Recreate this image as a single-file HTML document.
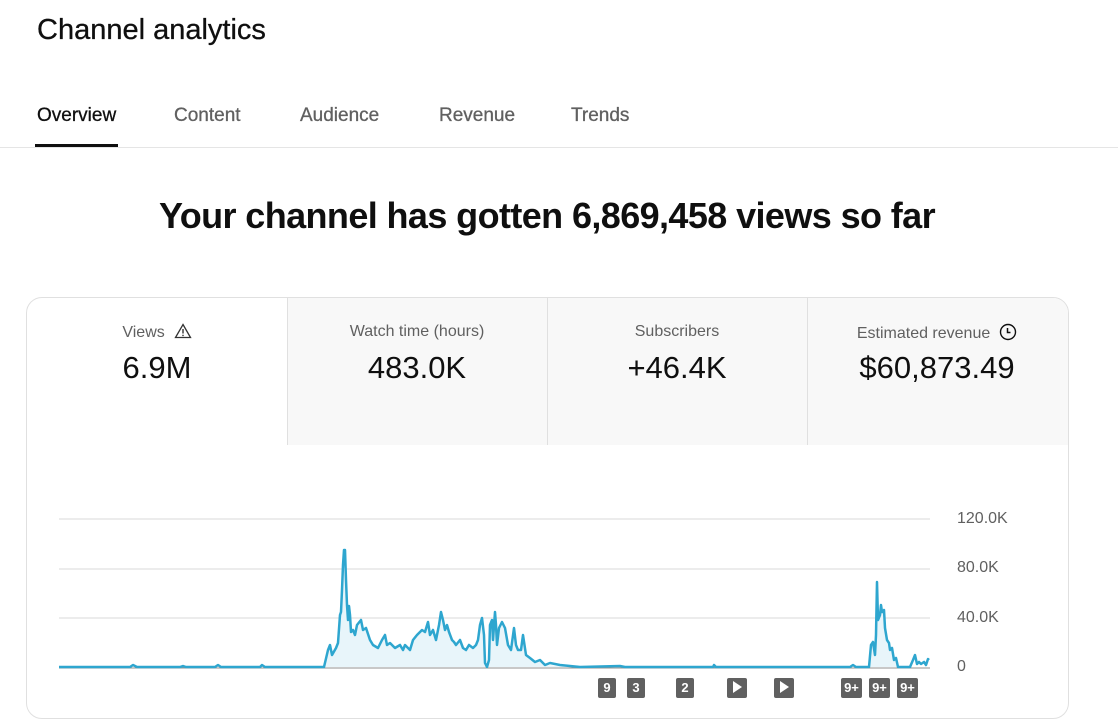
<!DOCTYPE html>
<html><head><style>
body{margin:0;width:1118px;height:698px;overflow:hidden;background:#fff;font-family:"Liberation Sans",sans-serif;position:relative;color:#0f0f0f}
.a{position:absolute}
.tab{position:absolute;top:105px;font-size:19px;color:#606060;font-weight:500;-webkit-text-stroke:0.3px #606060}
.lbl{position:absolute;top:323px;width:260px;text-align:center;font-size:16px;color:#606060}
.val{position:absolute;top:350px;width:260px;text-align:center;font-size:31px;color:#0f0f0f}
.b{position:absolute;top:678px;height:20px;background:#606060;color:#fff;font-size:13px;font-weight:bold;text-align:center;line-height:20px;border-radius:2px}
.ax{position:absolute;left:957px;font-size:16px;color:#606060}
</style></head><body>
<div class="a" style="left:37px;top:14px;font-size:29px;-webkit-text-stroke:0.3px #0f0f0f">Channel analytics</div>
<div class="tab" style="left:37px;color:#0f0f0f;-webkit-text-stroke:0.3px #0f0f0f">Overview</div>
<div class="tab" style="left:174px">Content</div>
<div class="tab" style="left:300px">Audience</div>
<div class="tab" style="left:439px">Revenue</div>
<div class="tab" style="left:571px">Trends</div>
<div class="a" style="left:35px;top:144px;width:83px;height:3px;background:#0f0f0f"></div>
<div class="a" style="left:0;top:147px;width:1118px;height:1px;background:#e5e5e5"></div>
<div class="a" style="left:0;top:195px;width:1094px;text-align:center;font-size:36px;font-weight:bold;letter-spacing:-0.6px">Your channel has gotten 6,869,458 views so far</div>
<div class="a" style="left:26px;top:297px;width:1041px;height:420px;border:1px solid #e0e0e0;border-radius:16px;overflow:hidden">
 <div class="a" style="left:260px;top:0;width:781px;height:147px;background:#f8f8f8"></div>
 <div class="a" style="left:260px;top:0;width:1px;height:147px;background:#e0e0e0"></div>
 <div class="a" style="left:520px;top:0;width:1px;height:147px;background:#e0e0e0"></div>
 <div class="a" style="left:780px;top:0;width:1px;height:147px;background:#e0e0e0"></div>
</div>
<div class="lbl" style="left:27px">Views &nbsp;<svg width="18" height="16" viewBox="0 0 18 16" style="vertical-align:-2px"><path d="M9 1.5L16.5 14.5H1.5Z" fill="none" stroke="#333" stroke-width="1.3"/><path d="M9 6v4.5M9 11.8v1.3" stroke="#333" stroke-width="1.4"/></svg></div>
<div class="val" style="left:27px">6.9M</div>
<div class="lbl" style="left:287px">Watch time (hours)</div>
<div class="val" style="left:287px">483.0K</div>
<div class="lbl" style="left:547px">Subscribers</div>
<div class="val" style="left:547px">+46.4K</div>
<div class="lbl" style="left:807px">Estimated revenue &nbsp;<svg width="18" height="18" viewBox="0 0 18 18" style="vertical-align:-3px"><circle cx="9" cy="9" r="7.5" fill="none" stroke="#0f0f0f" stroke-width="1.4"/><path d="M8.5 5v4.5h3" fill="none" stroke="#0f0f0f" stroke-width="1.5"/></svg></div>
<div class="val" style="left:807px">$60,873.49</div>
<svg class="a" style="left:0;top:0" width="1118" height="698">
<g stroke="#e5e5e5" stroke-width="1.5"><line x1="59" y1="519" x2="930" y2="519"/><line x1="59" y1="569" x2="930" y2="569"/><line x1="59" y1="618" x2="930" y2="618"/></g>
<line x1="59" y1="668" x2="930" y2="668" stroke="#909090" stroke-width="1"/>
<polygon fill="#e8f5fa" points="324,667 328,650 330,645 332,655 336,648 338,643 340,615 341,612 342,590 343,565 344,550 345,550 346,580 347,605 348,620 349,606 350,615 351,632 353,630 355,635 357,625 361,620 363,630 366,628 370,640 373,645 378,648 382,640 385,635 387,645 390,643 395,648 400,645 403,650 405,645 410,650 413,640 417,635 422,630 425,632 428,622 430,635 433,630 436,640 439,625 441,612 443,620 445,630 447,625 449,632 452,640 454,642 456,645 460,640 463,648 466,650 469,645 473,648 476,645 478,640 480,625 482,618 484,635 485,663 487,667 489,660 490,625 492,620 493,640 495,612 496,625 497,645 499,628 502,622 505,628 508,645 511,650 514,628 516,645 518,650 521,650 523,635 526,655 530,658 535,662 540,660 545,665 570,667 324,667"/>
<polygon fill="#e8f5fa" points="869,667 871,645 873,642 875,655 876,635 877,582 878,620 880,615 881,605 882,612 883,612 884,610 885,628 887,640 889,643 890,650 892,648 894,660 896,658 898,667"/>
<polyline fill="none" stroke="#2ea6cf" stroke-width="2.5" stroke-linejoin="round" points="59,667 130,667 133,665 137,667 180,667 183,666 186,667 215,667 218,665 221,667 260,667 262,665 265,667 324,667 328,650 330,645 332,655 336,648 338,643 340,615 341,612 342,590 343,565 344,550 345,550 346,580 347,605 348,620 349,606 350,615 351,632 353,630 355,635 357,625 361,620 363,630 366,628 370,640 373,645 378,648 382,640 385,635 387,645 390,643 395,648 400,645 403,650 405,645 410,650 413,640 417,635 422,630 425,632 428,622 430,635 433,630 436,640 439,625 441,612 443,620 445,630 447,625 449,632 452,640 454,642 456,645 460,640 463,648 466,650 469,645 473,648 476,645 478,640 480,625 482,618 484,635 485,663 487,667 489,660 490,625 492,620 493,640 495,612 496,625 497,645 499,628 502,622 505,628 508,645 511,650 514,628 516,645 518,650 521,650 523,635 526,655 530,658 535,662 540,660 545,665 550,663 560,665 570,666 580,667 620,666 625,667 713,667 714,665 716,667 850,667 853,665 856,667 869,667 871,645 873,642 875,655 876,635 877,582 878,620 880,615 881,605 882,612 883,612 884,610 885,628 887,640 889,643 890,650 892,648 894,660 896,658 898,667 905,667 910,667 913,660 915,655 917,664 919,662 921,664 924,662 926,665 928,659 929,660"/>
</svg>
<div class="ax" style="top:510px">120.0K</div>
<div class="ax" style="top:559px">80.0K</div>
<div class="ax" style="top:609px">40.0K</div>
<div class="ax" style="top:658px">0</div>
<div class="b" style="left:598px;width:18px">9</div>
<div class="b" style="left:627px;width:18px">3</div>
<div class="b" style="left:676px;width:18px">2</div>
<div class="b" style="left:727px;width:20px"><svg width="10" height="12" viewBox="0 0 10 12" style="vertical-align:-1px"><path d="M1 0L10 6L1 12Z" fill="#fff"/></svg></div>
<div class="b" style="left:774px;width:20px"><svg width="10" height="12" viewBox="0 0 10 12" style="vertical-align:-1px"><path d="M1 0L10 6L1 12Z" fill="#fff"/></svg></div>
<div class="b" style="left:841px;width:21px">9+</div>
<div class="b" style="left:869px;width:21px">9+</div>
<div class="b" style="left:897px;width:21px">9+</div>
</body></html>
